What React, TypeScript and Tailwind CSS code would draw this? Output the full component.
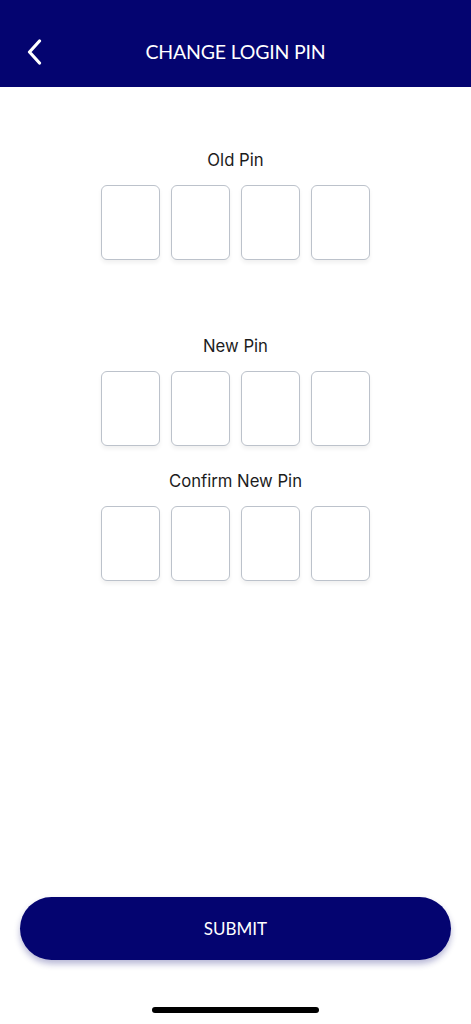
import React from 'react'

const PIN_LENGTH = 4

const PinRow = ({ label, className = '' }: { label: string; className?: string }) => (
  <div className={`flex flex-col items-center ${className}`}>
    <div className="text-[16.7px] leading-[24px] text-[#1c1c1c] font-['Inter','Noto_Sans',sans-serif] mb-[13px]">
      {label}
    </div>
    <div className="flex gap-[11px]">
      {Array.from({ length: PIN_LENGTH }).map((_, i) => (
        <div
          key={i}
          className="w-[59px] h-[75px] rounded-[6px] border-[1.5px] border-[#bcc2cb] bg-white shadow-[0_3px_4px_rgba(0,0,0,0.06)]"
        />
      ))}
    </div>
  </div>
)

export default function App() {
  return (
    <div className="w-[471px] h-[1024px] bg-white flex flex-col font-['Lato','Open_Sans',sans-serif]">
      {/* header */}
      <div className="h-[87px] bg-[#040470] relative flex items-center justify-center pt-[16px]">
        <button className="absolute left-[26px] top-[39px] w-[16px] h-[26px] flex items-center justify-center">
          <svg width="15" height="26" viewBox="0 0 15 26" fill="none">
            <path d="M12.5 2 L2.5 13 L12.5 24" stroke="white" strokeWidth="3.2" strokeLinecap="round" strokeLinejoin="round" />
          </svg>
        </button>
        <h1 className="text-white text-[19.5px] tracking-[-0.2px] font-normal">CHANGE LOGIN PIN</h1>
      </div>

      <PinRow label="Old Pin" className="mt-[61px]" />
      <PinRow label="New Pin" className="mt-[74px]" />
      <PinRow label="Confirm New Pin" className="mt-[23px]" />

      <div className="flex-1" />

      <div className="px-[20px]">
        <button className="w-full h-[63px] rounded-full bg-[#040470] text-white text-[17px] shadow-[0_4px_6px_rgba(20,20,120,0.3)]">
          SUBMIT
        </button>
      </div>
      <div className="flex justify-center pt-[47px] pb-[11px]">
        <div className="w-[167px] h-[6px] rounded-full bg-black" />
      </div>
    </div>
  )
}
